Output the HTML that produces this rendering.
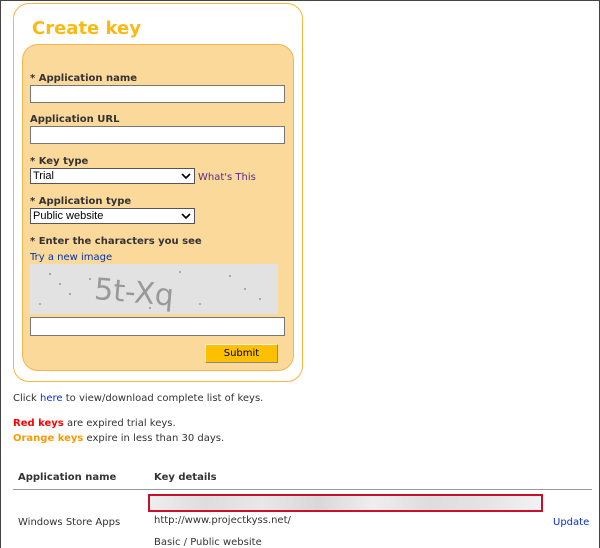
<!DOCTYPE html>
<html><head><style>
*{box-sizing:border-box;margin:0;padding:0}
body{width:600px;height:548px;overflow:hidden;background:#fff;font-family:Tahoma,"DejaVu Sans","Liberation Sans",sans-serif;font-size:10px;color:#333;position:relative}
.frame{position:absolute;left:0;top:0;width:600px;height:548px;border:1px solid #444;border-bottom:none}
.a{position:absolute;white-space:nowrap}
.card{position:absolute;left:13px;top:3px;width:290px;height:379px;border:1px solid #f9b43c;border-radius:16px;background:#fff}
.panel{position:absolute;left:22px;top:44px;width:272px;height:327px;border:1px solid #f5b54a;border-radius:16px;background:#fbd99b}
.lbl{font-weight:bold;font-size:10px;color:#333}
.inp{position:absolute;background:#fff;border:1px solid #777}
.sel{position:absolute;background:#fff;border:1px solid #555;font-family:"Liberation Sans",sans-serif;font-size:11px;color:#000;padding-left:2px;line-height:14px}
.sel svg{position:absolute;right:3px;top:4px}
</style></head><body>
<div class="frame"></div>
<div class="card"></div>
<div class="panel"></div>
<div class="a" style="left:32px;top:18px;font-size:18px;font-weight:bold;color:#fdb913;font-family:'DejaVu Sans',sans-serif">Create key</div>
<div class="a lbl" style="left:30px;top:73px">* Application name</div>
<div class="inp" style="left:30px;top:85px;width:255px;height:18px"></div>
<div class="a lbl" style="left:30px;top:114px">Application URL</div>
<div class="inp" style="left:30px;top:126px;width:255px;height:18px"></div>
<div class="a lbl" style="left:30px;top:156px">* Key type</div>
<div class="sel" style="left:30px;top:168px;width:165px;height:16px">Trial<svg width="10" height="7" viewBox="0 0 10 7"><path d="M1 1l4 4 4-4" stroke="#000" stroke-width="1.6" fill="none"/></svg></div>
<div class="a" style="left:198px;top:172px;color:#5a2a8a">What's This</div>
<div class="a lbl" style="left:30px;top:196px">* Application type</div>
<div class="sel" style="left:30px;top:208px;width:165px;height:16px">Public website<svg width="10" height="7" viewBox="0 0 10 7"><path d="M1 1l4 4 4-4" stroke="#000" stroke-width="1.6" fill="none"/></svg></div>
<div class="a lbl" style="left:30px;top:236px">* Enter the characters you see</div>
<div class="a" style="left:30px;top:252px;color:#0033aa">Try a new image</div>
<svg class="a" style="left:30px;top:264px" width="248" height="50"><rect width="248" height="50" fill="#e2e2e2"/>
<g fill="#999"><circle cx="20" cy="10" r="1"/><circle cx="40" cy="30" r="1"/><circle cx="60" cy="15" r="1"/><circle cx="170" cy="40" r="1"/><circle cx="200" cy="12" r="1"/><circle cx="230" cy="35" r="1"/><circle cx="120" cy="44" r="1"/><circle cx="10" cy="40" r="1"/><circle cx="150" cy="8" r="1"/><circle cx="215" cy="25" r="1"/><circle cx="30" cy="20" r="1"/></g>
<text x="64" y="38" font-family="DejaVu Sans" font-size="30" fill="#999" transform="rotate(5 100 30)">5t-Xq</text></svg>
<div class="inp" style="left:30px;top:317px;width:255px;height:19px"></div>
<div class="a" style="left:205px;top:344px;width:73px;height:19px;background:#fdc000;border:1px solid #888;border-top-color:#eee;border-left-color:#eee;text-align:center;line-height:18px;color:#000">Submit</div>
<div class="a" style="left:13px;top:393px">Click <span style="color:#0033cc">here</span> to view/download complete list of keys.</div>
<div class="a" style="left:13px;top:418px"><b style="color:#f00">Red keys</b> are expired trial keys.</div>
<div class="a" style="left:13px;top:433px"><b style="color:#f90">Orange keys</b> expire in less than 30 days.</div>
<div class="a lbl" style="left:18px;top:472px">Application name</div>
<div class="a lbl" style="left:154px;top:472px">Key details</div>
<div class="a" style="left:13px;top:489px;width:579px;height:1px;background:#999"></div>
<div class="a" style="left:148px;top:494px;width:395px;height:18px;border:2px solid #c8102e;background:linear-gradient(90deg,#eee,#ddd,#e8e8e8,#d8d8d8,#eee,#ddd,#e4e4e4,#f2f2f2)"></div>
<div class="a" style="left:18px;top:517px">Windows Store Apps</div>
<div class="a" style="left:154px;top:515px">http://www.projectkyss.net/</div>
<div class="a" style="left:553px;top:517px;color:#0033cc">Update</div>
<div class="a" style="left:154px;top:537px">Basic / Public website</div>
</body></html>
